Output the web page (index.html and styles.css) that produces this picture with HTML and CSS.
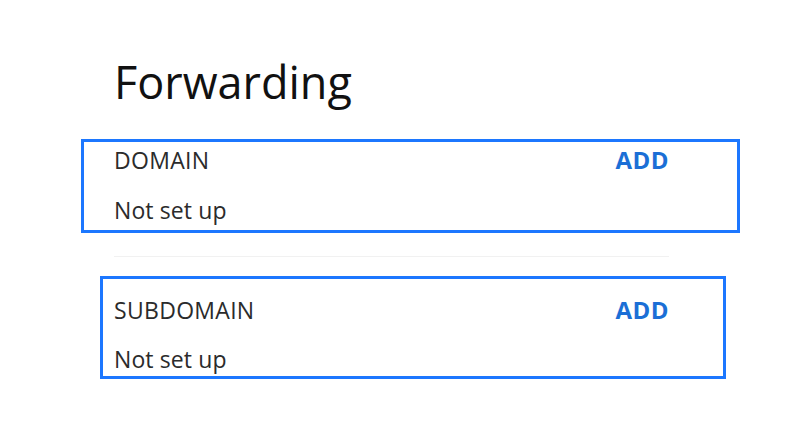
FILE: index.html
```html
<!DOCTYPE html>
<html lang="en">
<head>
    <meta charset="UTF-8">
    <meta name="viewport" content="width=device-width, initial-scale=1.0">
    <title>Forwarding</title>
    <link rel="stylesheet" href="styles.css">
</head>
<body>
    <div class="page">
        <h1>Forwarding</h1>

        <!-- Domain forwarding -->
        <div class="section section-domain">
            <div class="row">
                <span class="label">DOMAIN</span>
                <a class="add" href="#">ADD</a>
            </div>
            <div class="row value">Not set up</div>
        </div>

        <hr class="divider">

        <!-- Subdomain forwarding -->
        <div class="section section-subdomain">
            <div class="row">
                <span class="label">SUBDOMAIN</span>
                <a class="add" href="#">ADD</a>
            </div>
            <div class="row value">Not set up</div>
        </div>
    </div>
</body>
</html>
```

FILE: styles.css
```css
body {
    margin: 0;
    padding: 0;
    background-color: #fff;
    color: #2b2b2b;
    font-family: "Open Sans", Arial, sans-serif;
}
.page {
    width: 555px;
    margin-left: 114px;
    padding-top: 52px;
}
h1 {
    margin: 0 0 27px;
    font-size: 45px;
    font-weight: 400;
    line-height: 60px;
    color: #111;
}
.section {
    border: 3px solid #1c77ff;
}
.section-domain {
    margin: 0 -71px 0 -33px;
    padding: 4px 68px 6px 30px;
}
.section-subdomain {
    margin: 0 -57px 0 -14px;
    padding: 17px 54px 3px 11px;
}
.row {
    display: flex;
    justify-content: space-between;
    align-items: center;
    height: 28px;
    line-height: 28px;
    font-size: 23px;
    letter-spacing: 0.3px;
}
.row.value {
    margin-top: 22px;
    letter-spacing: 0.1px;
}
.section-subdomain .row.value {
    margin-top: 21px;
}
.add {
    color: #1b6fd6;
    font-weight: 700;
    font-size: 24px;
    letter-spacing: 0.5px;
    text-decoration: none;
}
.divider {
    margin: 23px 0 19px;
    border: none;
    border-top: 1px solid #f1f1f1;
    height: 0;
}
```
